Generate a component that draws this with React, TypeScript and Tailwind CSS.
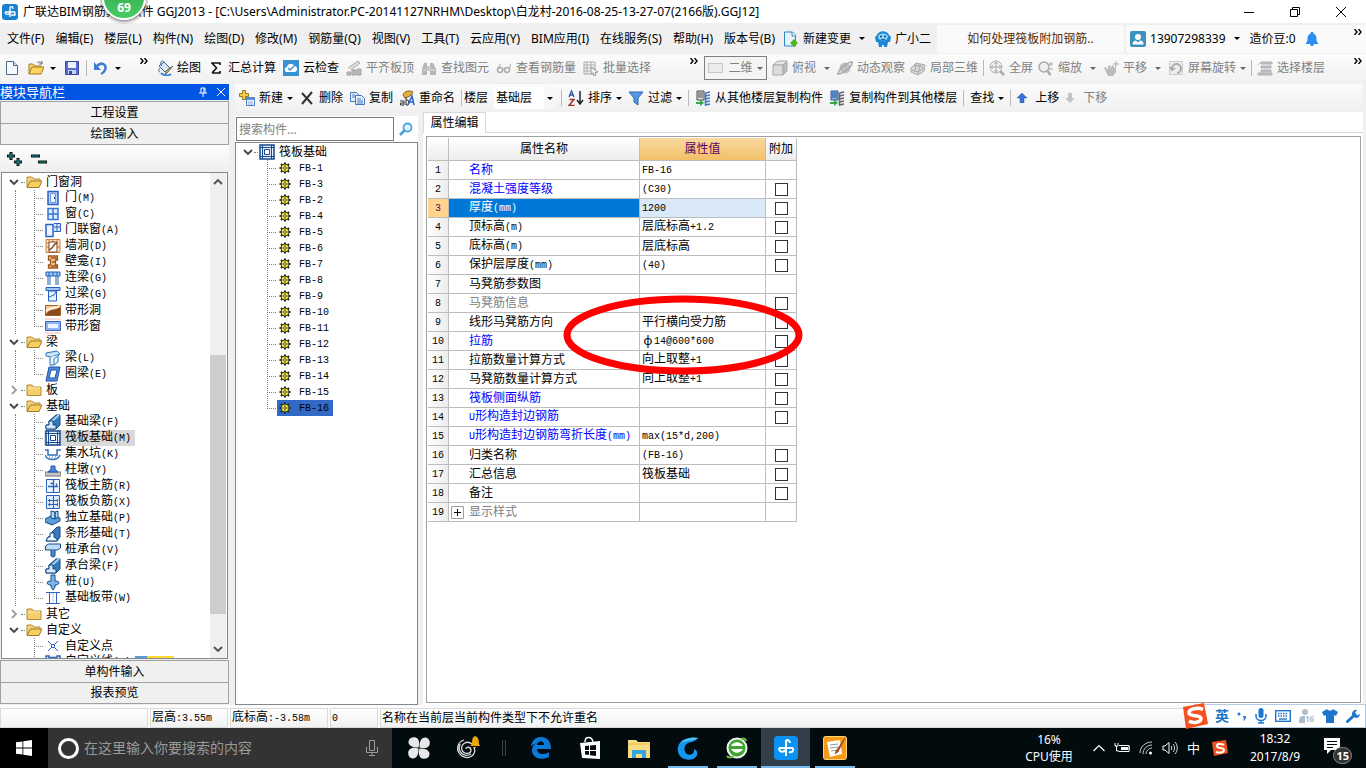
import React from 'react';

type Draw = React.ReactNode;

/* 16x16 drawings used by the toolbars and the trees */
const art: Record<string, Draw> = {
  newDoc: <><path d="M2.5 1.5h7l4 4v9h-11z" fill="#f7fbff" stroke="#4a6a94" /><path d="M9.500 1.500v4h4" fill="#cfe0f5" stroke="#4a6a94" /></>,
  open: <><path d="M1 14V4h4l2 2h6v3" fill="#f8d470" stroke="#a57a22" /><path d="M1 14l3-7h12l-3 7z" fill="#ffd45e" stroke="#a57a22" /><path d="M9 3c2-2 4-1 5 1m0-3v3h-3" fill="none" stroke="#5b6f86" /></>,
  save: <><path d="M1.500 1.500h13v13h-13z" fill="#5570cf" stroke="#39489c" /><path d="M4 2h8v6H4z" fill="#eef2fc" /><path d="M4 10h8v4H4z" fill="#c9d3ee" /><path d="M5 11h3v3H5z" fill="#39489c" /></>,
  undo: <><path d="M4 6c5-5 10-1 8 4-1 2-2 3-4 4" fill="none" stroke="#3f7bd6" strokeWidth="2.500" /><path d="M1 2v8h7z" fill="#3f7bd6" /></>,
  paint: <><path d="M2 6l5-4 6 6-5 4z" fill="#dce9fa" stroke="#35609d" /><path d="M3 8c-2 2-1 4 0 4M7 2c-2-3-5 1-2 4" fill="none" stroke="#35609d" /><path d="M16 6l-6 7-2 2 1-4z" fill="#efbf3d" stroke="#6a6255" /><path d="M4 13c3 3 7 3 10 1" fill="none" stroke="#4186dd" strokeWidth="2" /></>,
  sum: <path d="M4 4V3h8v2M4 3l4.500 5L4 13M4 13h8v-2" fill="none" stroke="#111" strokeWidth="1.600" />,
  cloud: <><rect width="16" height="16" fill="#3791d2" /><path d="M3 12c-3-3 0-5 1-5 1-4 6-4 7-1 4 0 4 5 1 6z" fill="#fff" /><path d="M5 8l2 2 4-4" fill="none" stroke="#3791d2" strokeWidth="1.500" /></>,
  align: <><path d="M1 12h4v3H1zM6 10h4v5H6zM11 9h4v6h-4z" fill="#bbb" stroke="#a5a5a5" /><path d="M2 8L12 1l2 2-9 7" fill="#ddd" stroke="#aaa" /></>,
  binoc: <><path d="M1 15V9l2-6h3v12zM9 15V3h3l3 6v6z" fill="#b5b5b5" /><path d="M6 6h4v5H6z" fill="#cacaca" /><path d="M2 10h3m5 0h4" stroke="#eee" /></>,
  glasses: <><circle cx="4" cy="10" r="2.500" fill="none" stroke="#aaa" strokeWidth="1.500" /><circle cx="11" cy="10" r="2.500" fill="none" stroke="#aaa" strokeWidth="1.500" /><path d="M1.500 9l3-5M13.500 9l1-5M6 9h3" stroke="#aaa" fill="none" /></>,
  batch: <><path d="M1 2h11v12H1zM1 5h11M1 8h11M1 11h11M4 2v12M8 2v6" fill="none" stroke="#aaa" /><path d="M8 7l7 5-3 .500 1 3-2 .500-1-3-2 1z" fill="#eee" stroke="#999" /></>,
  cube: <><path d="M1 5l5-4h9l-4 4z" fill="#e8e8e8" stroke="#a8a8a8" /><path d="M1 5h10v10H1z" fill="#dcdcdc" stroke="#a8a8a8" /><path d="M11 5l4-4v10l-4 4z" fill="#bcbcbc" stroke="#a8a8a8" /></>,
  orbit: <><circle cx="8" cy="8" r="5.500" fill="#c0c0c0" /><path d="M1 14c0-4 9-12 14-12 1 4-9 12-14 12z" fill="none" stroke="#a6a6a6" strokeWidth="1.500" /></>,
  local3d: <><path d="M1 8l5-5 9 2-1 6-6 4-7-3z" fill="#d9d9d9" stroke="#a9a9a9" /><path d="M6 3l-1 9M10 4l-2 11M1 10l7 2 6-4M4 5l9 2" fill="none" stroke="#a9a9a9" /></>,
  full: <><circle cx="7" cy="7" r="6" fill="#f1f1f1" stroke="#aaa" /><path d="M7 2v10M2 7h10M5.500 4L7 2l1.500 2M5.500 10L7 12l1.500-2M4 5.500L2 7l2 1.500M10 5.500L12 7l-2 1.500" fill="none" stroke="#aaa" /><path d="M11 11l4 4" stroke="#aaa" strokeWidth="2.500" /></>,
  zoom: <><circle cx="6" cy="7" r="5" fill="#eee" stroke="#aaa" strokeWidth="1.500" /><path d="M9.500 11l3 4" stroke="#aaa" strokeWidth="2.500" /><path d="M11 4h4m-2-2v4M11 9h4" stroke="#aaa" /></>,
  pan: <><path d="M1 8l2-1 2 3V6l2-1 1 3 1-3 2 1v2l2-1v5l-3 4H5z" fill="#bbb" /><path d="M10 4h6M13 1v6" stroke="#aaa" /></>,
  rotate: <><path d="M1.500 1.500h13v13h-13z" fill="#eee" stroke="#ccc" /><path d="M4 9a4.500 4.500 0 1 1 5 4M2 7l2 3 3-2" fill="none" stroke="#aaa" strokeWidth="2" /></>,
  floors: <path d="M4 2h11v2H4zM1 5l3-3M4 6h10v2H4zM4 10h10v2H4zM1 13h14v2H1z" fill="#bbb" stroke="#b4b4b4" />,
  rect: <rect x=".500" y="3.500" width="14" height="9" fill="#ececec" stroke="#c7c7c7" />,
  create: <><path d="M3.500.500h3v3h3v3h-3v3h-3v-3h-3v-3h3z" fill="#f2cf45" stroke="#9a7c1a" /><path d="M7.500 7.500h8v8h-8z" fill="#f3f8ff" stroke="#4a7fc9" /><path d="M8 8h7v2H8z" fill="#5c93dd" /><path d="M9 12h5M9 14h5" stroke="#83a8dc" /></>,
  remove: <path d="M3 3l10 11M13 2L3 14" stroke="#333" strokeWidth="2" fill="none" />,
  copy: <><path d="M1.500 2.500h6l3 3v6h-9z" fill="#e8f1fd" stroke="#4377bc" /><path d="M6.500 5.500h6l3 3v6h-9z" fill="#e8f1fd" stroke="#4377bc" /><path d="M8 9h4M8 11h6M8 13h6M3 5h3M3 7h3" stroke="#4377bc" /></>,
  rename: <><path d="M4 5c1-4 7-5 10-3l-3 4-5 2z" fill="#eab03f" stroke="#815c1d" /><path d="M1 11h4v4H1.500v-2H5M7 7v8h2l1-2-1-3H7" stroke="#333" fill="none" /><path d="M9 15l4-9 2 9M10 12h5" fill="none" stroke="#2d68cc" strokeWidth="1.600" /></>,
  sort: <><path d="M1 7l2.500-6L6 7M2 5h3" stroke="#2c55a8" fill="none" strokeWidth="1.300" /><path d="M1.500 9.500H6l-5 6h5.500" fill="none" stroke="#a03434" strokeWidth="1.500" /><path d="M12 1v12M9 10l3 4 3-4" fill="none" stroke="#222" strokeWidth="1.500" /></>,
  filter: <path d="M1 2h14L10 8v7l-4-3V8z" fill="#5796e5" stroke="#2e65b2" />,
  copyFrom: <><path d="M2 1h7v9H2z" fill="#e4e4e4" stroke="#444" /><path d="M3 3h5M3 5h5M3 7h5" stroke="#444" /><path d="M10.500 3l4.500-1M10.500 3v12l4.500-1M10.500 6l4.500-1M10.500 9l4.500-1M10.500 12l4.500-1" fill="none" stroke="#3f76c6" strokeWidth="1.600" /><path d="M1 12h4V9l4 4-4 3v-2H1z" fill="#3da64a" /></>,
  copyTo: <><path d="M2 1h7v9H2z" fill="#86b1ea" stroke="#27549c" /><path d="M3 3h5M3 5h5M3 7h5" stroke="#27549c" /><path d="M10.500 3l4.500-1M10.500 3v12l4.500-1M10.500 6l4.500-1M10.500 9l4.500-1M10.500 12l4.500-1" fill="none" stroke="#666" strokeWidth="1.600" /><path d="M1 12h4V9l4 4-4 3v-2H1z" fill="#3da64a" /></>,
  change: <><path d="M1.500 1h8l3 3v11h-11z" fill="#e5f3fc" stroke="#2a88c4" /><path d="M9 1v4h4" fill="#fff" stroke="#2a88c4" /><path d="M11 8l4 4-4 4-4-4z" fill="#4fb41e" /></>,
  robot: <><path d="M2 4c2-5 10-5 12 0l2 2-1 5h-2l-1 5H9v-2H7v2H4L3 11H1L0 6z" fill="#1c87d6" /><ellipse cx="8" cy="6" rx="5" ry="3.500" fill="#8fd4fa" /><circle cx="6" cy="5.500" r="1" fill="#084876" /><circle cx="10" cy="5.500" r="1" fill="#084876" /><path d="M6 8c1 1 3 1 4 0" stroke="#084876" fill="none" /></>,
  account: <><rect width="16" height="16" rx="2" fill="#3c92bd" /><circle cx="8" cy="6" r="3" fill="#fff" /><path d="M2.500 13.500c0-3 2-4 3.500-4l2 2 2-2c2 0 3.500 1 3.500 4z" fill="#fff" /></>,
  bell: <path d="M2 12c2-2 1-4 2-7 1-2 2-2 3-3V1h2v1c1 1 2 1 3 3 1 3 0 5 2 7v1h-4c-1 3-3 3-4 0H2z" fill="#2c8ef0" />,

  folderOpen: <><path d="M1 13V3h5l2 2h6v3" fill="#f3d27c" stroke="#b18a3b" /><path d="M1 13.500L4.500 7H16l-3 6.500z" fill="#f9cf5c" stroke="#9c7833" /></>,
  folder: <><path d="M1 13.500V3h5l1.500 2H15v8.500z" fill="#f5cf6b" stroke="#b18a3b" /><path d="M2 6h12" stroke="#fff0b8" /></>,
  door: <><path d="M3 1.500h10v13H3z" fill="#b7d2fb" stroke="#2b5fc4" strokeWidth="1.500" /><path d="M5.500 3.500h5v9h-5z" fill="#eaf3ff" stroke="#6c9ae0" /><path d="M9 8h1" stroke="#123c8c" strokeWidth="2" /></>,
  window: <><path d="M3 2.500h10v11H3z" fill="#dcebff" stroke="#3b73d1" strokeWidth="1.500" /><path d="M8 2v12M3 8h10" stroke="#3b73d1" strokeWidth="1.500" /></>,
  doorWindow: <><path d="M1 2.500h7v12H1z" fill="#eaf3ff" stroke="#2b5fc4" strokeWidth="1.500" /><path d="M9 1.500h6.500v8H9M12 1v8M9 5h6" fill="#dcebff" stroke="#2b5fc4" /></>,
  wallHole: <><path d="M1 1.500h14v13H1zM1 5h3M1 9h3M4 1v3M8 1v3M12 1v3M12 9h3" fill="#fbe0bf" stroke="#c98143" /><path d="M4 4h8v10H4z" fill="#fff" stroke="#7c4320" /><path d="M4 12c5-1 3-6 8-7" fill="none" stroke="#7c4320" strokeWidth="1.500" /></>,
  niche: <path d="M3.500 2h9v4h-2v5h2v3h-9v-3h2V6h-2zM6 4h6M7 8h3M6 12h6" fill="#f8c583" stroke="#9d5520" strokeWidth="1.300" />,
  linkBeam: <><path d="M1 2h14v4H1z" fill="#9cc4f7" stroke="#2461b8" /><path d="M3 6v9M5 6v9M11 6v9M13 6v9" stroke="#2461b8" /><path d="M4 2v4M8 2v4M12 2v4" stroke="#2461b8" /></>,
  lintel: <><path d="M1 1.500h14v3H1z" fill="#9cc4f7" stroke="#2461b8" /><path d="M3.500 5h8v10h-8z" fill="#e9f3ff" stroke="#2461b8" /><path d="M4 11l5-2 3-5" fill="none" stroke="#2461b8" /></>,
  stripHole: <><path d="M.500 3.500h15v10H.500z" fill="#f6c893" stroke="#a35c24" /><path d="M1 12C5 6 9 9 15 5v8H1z" fill="#8b4a1c" /><path d="M1 9c4-4 8-2 14-5" stroke="#fff3df" fill="none" strokeWidth="2" /></>,
  stripWindow: <><path d="M0 1h16M0 15h16" stroke="#f3b6a4" /><path d="M.500 3.500h15v9H.500z" fill="#8db4f4" stroke="#3767be" /><path d="M3 6h10v4H3z" fill="#edf4ff" /></>,
  beam: <><path d="M1 3l11-2 3 3-9 3-5-1z" fill="#c7e6fb" stroke="#2a78ba" /><path d="M5 7v8h4V9l5-4M9 15l4-3V6" fill="#e2f3fe" stroke="#2a78ba" /></>,
  ringBeam: <path d="M4 1h11l-3 14H1zM6 4l-2 8h6l2-8z" fill="#4f8ce0" fillRule="evenodd" stroke="#1f4fa4" />,
  foundBeam: <><path d="M1 15v-4h3V7l7-6h4v10l-4 4z" fill="#3b78b8" stroke="#134a86" /><path d="M7 7l7-6" stroke="#9fcdf5" strokeWidth="2" /><path d="M1 15v-4h3V7h4v4h3v4z" fill="#d3e9fc" stroke="#134a86" /></>,
  raft: <><path d="M1 1h14v14H1z" fill="#e6f1fc" stroke="#164a8c" strokeWidth="1.500" /><path d="M3.500 1v14M12.500 1v14M1 3.500h14M1 12.500h14" stroke="#164a8c" /><path d="M5.500 5.500h5v5h-5z" fill="#fff" stroke="#164a8c" /></>,
  sump: <><path d="M0 4h3v5h9V4h4M0 9c2 6 13 6 15 0" fill="none" stroke="#2e72c0" strokeWidth="1.500" /><path d="M4 11h1M7 11h1M10 11h1M6 13h1M9 13h1" stroke="#2e72c0" /></>,
  pier: <><path d="M0 10h16v4H0z" fill="#c6c6c6" stroke="#777" /><path d="M3 10l2-2h1V4h4v4h1l2 2z" fill="#4c8ce2" stroke="#1f55a8" /></>,
  mainBar: <><path d="M1.500 1.500h13v13h-13z" fill="#edf5ff" stroke="#2c62bb" /><path d="M8.500 2v3.500h-3M8.500 5v9M3 8.500h10M11.500 8v-2.500" stroke="#2c62bb" strokeWidth="1.300" fill="none" /></>,
  negBar: <><path d="M1.500 1.500h13v13h-13z" fill="#dce8fb" stroke="#2c62bb" /><path d="M8.500 2v12M3 6.500h10M3 10.500h10M4.500 5v3M12.500 5v3M4.500 9v3M12.500 9v3" stroke="#2c62bb" /></>,
  isolated: <><path d="M0 9l6-3 9 2v3l-8 4-7-3z" fill="#5d9ddb" stroke="#134a86" /><path d="M6 1l4 1v7l-4-1zM10 2l3-1v6l-3 2z" fill="#b6d8f5" stroke="#134a86" /></>,
  strip: <><path d="M1 15l2-4 4-2V6l5-5h3v10l-3 4z" fill="#3b78b8" stroke="#134a86" /><path d="M1 15l2-4h2V7h4v4l3 2v2z" fill="#e8f4ff" stroke="#134a86" /></>,
  pileCap: <><path d="M.500 4l3-2h12v4l-3 2h-12z" fill="#bcdcf8" stroke="#134a86" /><path d="M6 8v6l2 1 2-1V8" fill="#4b8ad0" stroke="#134a86" /></>,
  pile: <path d="M6 1h4v6c3 0 4 1 4 2s-2 2-4 2v2l-2 3-2-3v-2c-2 0-4-1-4-2s1-2 4-2z" fill="#7db1ea" stroke="#134a86" />,
  band: <><path d="M1 2.500h14M1 13.500h14" stroke="#2f62bd" /><path d="M4.500 3v10M11.500 3v10" stroke="#2f62bd" /><path d="M8 3v10" stroke="#9db9e8" strokeDasharray="2 1" /></>,
  point: <><path d="M3 3l10 10M13 3L3 13" stroke="#2b63bd" /><path d="M6.500 6.500h3v3h-3z" fill="#fff" stroke="#2b63bd" /></>,
  line: <path d="M1 2h3v3H1zM12 2h3v3h-3zM4 3.500h8" fill="#fff" stroke="#2b63bd" strokeWidth="1.500" />,
  gear: <><path d="M8 2.500v11M2.500 8h11M4 4l8 8M12 4l-8 8" stroke="#222" strokeWidth="2" /><circle cx="8" cy="8" r="4" fill="#f5ea1e" stroke="#333" /><path d="M8 5v6M5 8h6" stroke="#6b6720" strokeWidth=".800" /><circle cx="8" cy="8" r="1.300" fill="#fff" stroke="#333" strokeWidth=".800" /></>,
};

function Icon({ name }: { name: string }) {
  return <svg viewBox="0 0 16 16" className="h-4 w-4 shrink-0">{art[name]}</svg>;
}

function Caret({ muted = false }: { muted?: boolean }) {
  return (
    <svg viewBox="0 0 6 3" className={muted ? 'h-[3px] w-1.5 shrink-0 text-[#666]' : 'h-[3px] w-1.5 shrink-0 text-black'}>
      <path d="M0 0h6L3 3z" fill="currentColor" />
    </svg>
  );
}

const Overflow = () => (
  <svg viewBox="0 0 8 6" className="h-1.5 w-2 shrink-0">
    <path d="M.5 0l2.500 3L.500 6M4.500 0L7 3 4.500 6" fill="none" stroke="#000" strokeWidth="1.400" />
  </svg>
);

const Divider = () => <span className="h-4 w-px shrink-0 bg-[#b9b9b9]" />;

/* CJK runs at 12px, ASCII runs in a half-width monospace face */
function Cell({ text }: { text: string }) {
  return (
    <span className="whitespace-pre">
      {text.split(/([\x20-\x7e]+)/).map((part, i) =>
        i % 2 ? <span key={i} className="font-['Liberation_Mono','Noto_Sans_CJK_SC',monospace] text-[10px]">{part}</span> : part,
      )}
    </span>
  );
}

function Tool({ icon, label, muted, caret, tight }: { icon?: string; label: string; muted?: boolean; caret?: boolean; tight?: boolean }) {
  return (
    <button className={muted ? 'flex items-center gap-1 text-[#808080]' : 'flex items-center gap-1 text-black'}>
      {icon && <Icon name={icon} />}
      {label}
      {caret && <span className={tight ? '' : 'pr-0.5 pl-1'}><Caret muted={muted} /></span>}
    </button>
  );
}

const menus = ['文件(F)', '编辑(E)', '楼层(L)', '构件(N)', '绘图(D)', '修改(M)', '钢筋量(Q)', '视图(V)', '工具(T)', '云应用(Y)', 'BIM应用(I)', '在线服务(S)', '帮助(H)', '版本号(B)'];

function TitleBar() {
  return (
    <header className="relative flex h-[23px] shrink-0 items-center bg-white pl-0.5">
      <svg viewBox="0 0 16 16" className="h-4 w-4">
        <rect width="16" height="16" rx="3" fill="#1b82d1" />
        <path d="M8 3v10M3 8h10M3 8c0 3 3 3 5 1M8 3c2-1 3 0 3 2M13 8v3H9" fill="none" stroke="#fff" strokeWidth="1.300" />
      </svg>
      <h1 className="ml-[5px] flex-1 whitespace-nowrap text-[12px]">
        广联达BIM钢筋算量软件 GGJ2013 - [C:\Users\Administrator.PC-20141127NRHM\Desktop\白龙村-2016-08-25-13-27-07(2166版).GGJ12]
      </h1>
      <div className="flex items-center gap-9 pr-5">
        <button aria-label="最小化"><svg viewBox="0 0 10 10" className="h-2.5 w-2.5"><path d="M0 5.500h10" stroke="#000" /></svg></button>
        <button aria-label="还原"><svg viewBox="0 0 10 10" className="h-2.5 w-2.5"><path d="M.5 2.500h7v7h-7zM2.500 2.500v-2h7v7h-2" fill="none" stroke="#000" /></svg></button>
        <button aria-label="关闭"><svg viewBox="0 0 10 10" className="h-2.5 w-2.5"><path d="M0 0l10 10M10 0L0 10" stroke="#000" /></svg></button>
      </div>
      {/* floating speed ball */}
      <div className="absolute top-0 left-[100px] z-10 h-6 w-12 overflow-hidden">
        <div className="absolute bottom-1 left-0.5 flex h-11 w-11 items-end justify-center rounded-full border-2 border-white bg-gradient-to-b from-[#2ca548] to-[#48cb63] pb-0.5 text-[12px] font-bold text-white shadow-[0_1px_4px_#555]">69</div>
      </div>
    </header>
  );
}

function MenuBar() {
  return (
    <nav className="flex h-[31px] shrink-0 items-center bg-[#f0f0f0] pl-[7px] whitespace-nowrap">
      <div className="flex items-center gap-[11px]">
        {menus.map((m) => <button key={m}>{m}</button>)}
      </div>
      <div className="ml-2 flex items-center gap-2">
        <Tool icon="change" label="新建变更" caret />
        <Tool icon="robot" label="广小二" />
      </div>
      <a href="#tip" className="ml-1.5 flex h-7 w-[187px] items-center justify-center rounded bg-[#fafafa] text-[#5a2d00]">如何处理筏板附加钢筋..</a>
      <div className="ml-0.5 flex h-7 flex-1 items-center gap-2 rounded-l bg-[#fafafa] pl-1">
        <Tool icon="account" label="13907298339" caret />
        <span>造价豆:0</span>
        <Icon name="bell" />
        <span className="ml-auto flex h-5 items-start pr-1"><Overflow /></span>
      </div>
    </nav>
  );
}

function Toolbar() {
  return (
    <div className="flex h-[30px] shrink-0 items-center bg-gradient-to-b from-[#fcfcfc] to-[#f0f0f0] pb-0.5 whitespace-nowrap">
      <div className="flex w-[152px] items-center pl-1">
        <button aria-label="新建工程"><Icon name="newDoc" /></button>
        <button aria-label="打开" className="ml-2 flex items-center gap-1.5"><Icon name="open" /><Caret /></button>
        <button aria-label="保存" className="mr-1.5 ml-2"><Icon name="save" /></button>
        <Divider />
        <button aria-label="撤销" className="ml-1.5 flex items-center gap-1.5"><Icon name="undo" /><Caret /></button>
        <span className="ml-auto flex h-5 items-start pr-1"><Overflow /></span>
      </div>
      <div className="flex w-[552px] items-center gap-[7px] pl-[5px]">
        <Tool icon="paint" label="绘图" />
        <Tool icon="sum" label="汇总计算" />
        <Tool icon="cloud" label="云检查" />
        <Tool icon="align" label="平齐板顶" muted />
        <Tool icon="binoc" label="查找图元" muted />
        <Tool icon="glasses" label="查看钢筋量" muted />
        <Tool icon="batch" label="批量选择" muted />
        <span className="ml-auto flex h-5 items-start pr-1.5"><Overflow /></span>
      </div>
      <div className="flex flex-1 items-center gap-[5px]">
        <div className="flex h-6 w-[63px] items-center justify-center border border-[#808080] bg-[#f4f4f4]"><Tool icon="rect" label="二维" muted caret tight /></div>
        <Tool icon="cube" label="俯视" muted caret />
        <Tool icon="orbit" label="动态观察" muted />
        <Tool icon="local3d" label="局部三维" muted />
        <Divider />
        <Tool icon="full" label="全屏" muted />
        <Tool icon="zoom" label="缩放" muted caret />
        <Tool icon="pan" label="平移" muted caret />
        <Tool icon="rotate" label="屏幕旋转" muted caret tight />
        <Divider />
        <Tool icon="floors" label="选择楼层" muted />
        <span className="ml-auto flex h-5 items-start pr-1"><Overflow /></span>
      </div>
    </div>
  );
}

type Item = { icon: string; text: string; active?: boolean; badge?: boolean };
type Group = { text: string; open: boolean; items: Item[] };

const modules: Group[] = [
  { text: '门窗洞', open: true, items: [
    { icon: 'door', text: '门(M)' },
    { icon: 'window', text: '窗(C)' },
    { icon: 'doorWindow', text: '门联窗(A)' },
    { icon: 'wallHole', text: '墙洞(D)' },
    { icon: 'niche', text: '壁龛(I)' },
    { icon: 'linkBeam', text: '连梁(G)' },
    { icon: 'lintel', text: '过梁(G)' },
    { icon: 'stripHole', text: '带形洞' },
    { icon: 'stripWindow', text: '带形窗' },
  ] },
  { text: '梁', open: true, items: [
    { icon: 'beam', text: '梁(L)' },
    { icon: 'ringBeam', text: '圈梁(E)' },
  ] },
  { text: '板', open: false, items: [] },
  { text: '基础', open: true, items: [
    { icon: 'foundBeam', text: '基础梁(F)' },
    { icon: 'raft', text: '筏板基础(M)', active: true },
    { icon: 'sump', text: '集水坑(K)' },
    { icon: 'pier', text: '柱墩(Y)' },
    { icon: 'mainBar', text: '筏板主筋(R)' },
    { icon: 'negBar', text: '筏板负筋(X)' },
    { icon: 'isolated', text: '独立基础(P)' },
    { icon: 'strip', text: '条形基础(T)' },
    { icon: 'pileCap', text: '桩承台(V)' },
    { icon: 'foundBeam', text: '承台梁(F)' },
    { icon: 'pile', text: '桩(U)' },
    { icon: 'band', text: '基础板带(W)' },
  ] },
  { text: '其它', open: false, items: [] },
  { text: '自定义', open: true, items: [
    { icon: 'point', text: '自定义点' },
    { icon: 'line', text: '自定义线(X)', badge: true },
  ] },
];

function Chevron({ open }: { open: boolean }) {
  return (
    <svg viewBox="0 0 10 10" className="h-2.5 w-2.5 shrink-0">
      <path d={open ? 'M1 3l4 4 4-4' : 'M3 1l4 4-4 4'} fill="none" stroke={open ? '#444' : '#a0a0a0'} strokeWidth="1.800" />
    </svg>
  );
}

/* dotted connector from the parent line to a leaf */
function Branch({ last }: { last: boolean }) {
  return (
    <svg viewBox="0 0 10 16" className="h-4 w-2.5 shrink-0">
      <path d={last ? 'M.5 0v8' : 'M.5 0v16'} stroke="#808080" strokeDasharray="1 1" />
      <path d="M0 8.500h10" stroke="#808080" strokeDasharray="1 1" />
    </svg>
  );
}

const wideButton = 'flex h-[22px] shrink-0 items-center justify-center border border-b-0 border-[#a0a0a0] bg-[#f0f0f0] last:border-b';

function ModulePanel() {
  return (
    <aside className="flex w-[229px] shrink-0 flex-col pb-px">
      <div className="flex h-4 shrink-0 items-center bg-[#0055e5] text-white">
        <h2 className="flex-1 text-[13px] leading-4">模块导航栏</h2>
        <button aria-label="固定" className="mr-2.5"><svg viewBox="0 0 8 10" className="h-2.5 w-2"><path d="M2 1h4v5M2 1v5M5 1v5M0 6h8M4 6v4" fill="none" stroke="#fff" /></svg></button>
        <button aria-label="关闭面板" className="mr-1"><svg viewBox="0 0 8 8" className="h-2 w-2"><path d="M0 0l8 8M8 0L0 8" stroke="#fff" /></svg></button>
      </div>
      <div className="mt-px flex shrink-0 flex-col">
        <button className={wideButton}>工程设置</button>
        <button className={wideButton}>绘图输入</button>
      </div>
      <div className="flex h-[27px] shrink-0 items-center gap-2 bg-gradient-to-b from-[#fdfdfd] to-[#efefef] pl-[7px]">
        <button aria-label="全部展开"><svg viewBox="0 0 16 14" className="h-3.5 w-4"><path d="M4 0v8M0 4h8M11 6v8M7 10h8" stroke="#111" strokeWidth="3" /><path d="M4 1v6M1 4h6M11 7v6M8 10h6" stroke="#009c93" strokeWidth="1.200" /></svg></button>
        <button aria-label="全部折叠"><svg viewBox="0 0 16 14" className="h-3.5 w-4"><path d="M0 4h9M7 10h9" stroke="#111" strokeWidth="3" /><path d="M1 4h7M8 10h7" stroke="#009c93" strokeWidth="1.200" /></svg></button>
      </div>
      <div className="mx-px flex min-h-0 flex-1 overflow-hidden border border-[#82878f] bg-white">
        <ul className="min-w-0 flex-1 overflow-hidden pt-px pl-0.5">
          {modules.map((group, g) => (
            <li key={group.text}>
              <div className="flex h-4 items-center pl-[5px]">
                <Chevron open={group.open} />
                <span className="mr-px ml-0.5 w-1 border-t border-dotted border-[#808080]" />
                <Icon name={group.open ? 'folderOpen' : 'folder'} />
                <span className="ml-1"><Cell text={group.text} /></span>
              </div>
              <ul>
                {group.items.map((item, i) => (
                  <li key={item.text} className="flex h-4 items-center pl-[11px]">
                    <span className={g < modules.length - 1 ? 'h-4 w-[19px] shrink-0 border-l border-dotted border-[#808080]' : 'w-[19px] shrink-0'} />
                    <Branch last={i === group.items.length - 1 && g < modules.length - 1} />
                    <span className={item.active ? 'flex h-4 items-center gap-1 bg-[#d9d9d9] pr-1 pl-px' : 'flex h-4 items-center gap-1 pl-px'}>
                      <Icon name={item.icon} />
                      <Cell text={item.text} />
                      {item.badge && <span className="flex items-center"><span className="h-3 w-3 border-2 border-[#5a9ad5]" /><b className="bg-[#ffdb2e] px-0.5 text-[10px] leading-3">NEW</b></span>}
                    </span>
                  </li>
                ))}
              </ul>
            </li>
          ))}
        </ul>
        <div className="mr-px flex w-4 shrink-0 flex-col items-center bg-[#f0f0f0]">
          <svg viewBox="0 0 10 10" className="my-1 h-2.5 w-2.5 shrink-0"><path d="M1 7l4-4 4 4" fill="none" stroke="#505050" strokeWidth="1.800" /></svg>
          <div className="grow-[164]" />
          <div className="w-full grow-[260] bg-[#cdcdcd]" />
          <div className="grow-[26]" />
          <svg viewBox="0 0 10 10" className="my-1 h-2.5 w-2.5 shrink-0"><path d="M1 3l4 4 4-4" fill="none" stroke="#505050" strokeWidth="1.800" /></svg>
        </div>
      </div>
      <div className="mt-px flex shrink-0 flex-col">
        <button className={wideButton}>单构件输入</button>
        <button className={wideButton}>报表预览</button>
      </div>
    </aside>
  );
}

function EditBar() {
  return (
    <div className="flex h-7 shrink-0 items-center gap-1.5 bg-gradient-to-b from-[#fbfbfb] to-[#f0f0f0] pl-1 whitespace-nowrap">
      <Tool icon="create" label="新建" caret tight />
      <Tool icon="remove" label="删除" />
      <Tool icon="copy" label="复制" />
      <Tool icon="rename" label="重命名" />
      <Divider />
      <label className="-ml-1 flex items-center gap-1.5">
        楼层
        <span className="flex h-[22px] items-center bg-white">
          <select className="w-[50px] appearance-none bg-white pl-0.5 outline-none"><option>基础层</option></select>
          <span className="flex h-full w-[11px] items-center justify-center bg-[#f7f7f7]"><Caret /></span>
        </span>
      </label>
      <Divider />
      <Tool icon="sort" label="排序" caret tight />
      <Tool icon="filter" label="过滤" caret tight />
      <Divider />
      <Tool icon="copyFrom" label="从其他楼层复制构件" />
      <Tool icon="copyTo" label="复制构件到其他楼层" />
      <Divider />
      <Tool label="查找" caret tight />
      <Divider />
      <button className="flex items-center gap-2">
        <svg viewBox="0 0 10 10" className="h-2.5 w-2.5"><path d="M5 0l5 5H7v5H3V5H0z" fill="#3672dd" stroke="#24509f" strokeWidth=".500" /></svg>
        上移
      </button>
      <button className="flex items-center gap-2 text-[#808080]">
        <svg viewBox="0 0 10 10" className="h-2.5 w-2.5"><path d="M5 10l5-5H7V0H3v5H0z" fill="#c4c4c4" /></svg>
        下移
      </button>
    </div>
  );
}

const components = [1, 3, 2, 4, 5, 6, 7, 8, 9, 10, 11, 12, 13, 14, 15, 16];

function ComponentPanel() {
  return (
    <section className="flex w-[183px] shrink-0 flex-col pt-1">
      <div className="flex h-[26px] shrink-0 items-center bg-white pl-px">
        <input aria-label="搜索构件" placeholder="搜索构件..." className="h-6 min-w-0 flex-1 border border-[#7a7a7a] bg-white px-0.5 outline-none placeholder:text-[#808080]" />
        <button aria-label="搜索" className="flex w-6 justify-center">
          <svg viewBox="0 0 14 14" className="h-3.5 w-3.5"><circle cx="8.500" cy="5.500" r="4" fill="#e6f5ff" stroke="#4aa3e0" strokeWidth="1.800" /><path d="M5.500 8.500L1 13" stroke="#4aa3e0" strokeWidth="2.500" /></svg>
        </button>
      </div>
      <div className="min-h-0 flex-1 overflow-hidden border border-[#82878f] bg-white pt-px">
        <div className="flex h-4 items-center pl-[7px]">
          <Chevron open />
          <span className="mr-px ml-px w-1 border-t border-dotted border-[#808080]" />
          <Icon name="raft" />
          <span className="ml-1"><Cell text="筏板基础" /></span>
        </div>
        <ul>
          {components.map((n) => (
            <li key={n} className="flex h-4 items-center pl-[31px]">
              <Branch last={n === 16} />
              <span className={n === 16 ? 'flex h-4 items-center gap-1.5 bg-[#316ac5] pr-1' : 'flex h-4 items-center gap-1.5'}>
                <Icon name="gear" />
                <Cell text={`FB-${n}`} />
              </span>
            </li>
          ))}
        </ul>
      </div>
    </section>
  );
}

type Prop = { name: string; value?: string; check?: boolean; tone?: 'blue' | 'gray'; rebar?: boolean };

const props: Prop[] = [
  { name: '名称', value: 'FB-16', tone: 'blue' },
  { name: '混凝土强度等级', value: '(C30)', check: true, tone: 'blue' },
  { name: '厚度(mm)', value: '1200', check: true },
  { name: '顶标高(m)', value: '层底标高+1.2', check: true },
  { name: '底标高(m)', value: '层底标高', check: true },
  { name: '保护层厚度(mm)', value: '(40)', check: true },
  { name: '马凳筋参数图' },
  { name: '马凳筋信息', check: true, tone: 'gray' },
  { name: '线形马凳筋方向', value: '平行横向受力筋', check: true },
  { name: '拉筋', value: '14@600*600', check: true, tone: 'blue', rebar: true },
  { name: '拉筋数量计算方式', value: '向上取整+1', check: true },
  { name: '马凳筋数量计算方式', value: '向上取整+1', check: true },
  { name: '筏板侧面纵筋', check: true, tone: 'blue' },
  { name: 'U形构造封边钢筋', check: true, tone: 'blue' },
  { name: 'U形构造封边钢筋弯折长度(mm)', value: 'max(15*d,200)', tone: 'blue' },
  { name: '归类名称', value: '(FB-16)', check: true },
  { name: '汇总信息', value: '筏板基础', check: true },
  { name: '备注', check: true },
  { name: '显示样式', tone: 'gray' },
];

const tones = { blue: 'text-[#0000ff]', gray: 'text-[#808080]' };

function PropertyTable() {
  return (
    <div className="relative w-[369px]">
      <table className="w-full table-fixed border-separate border-spacing-0">
        <colgroup>
          <col className="w-[21px]" />
          <col className="w-[191px]" />
          <col className="w-[126px]" />
          <col className="w-[31px]" />
        </colgroup>
        <thead>
          <tr className="h-[23px]">
            <th className="border-r border-b border-[#bdbdbd] bg-gradient-to-b from-white to-[#ececec] p-0" />
            <th className="border-r border-b border-[#bdbdbd] bg-gradient-to-b from-white to-[#ececec] p-0 font-normal">属性名称</th>
            <th className="border-r border-b border-[#bdbdbd] bg-gradient-to-b from-[#f9d99f] to-[#f2c067] p-0 font-normal text-[#5f0060]">属性值</th>
            <th className="border-r border-b border-[#bdbdbd] bg-gradient-to-b from-white to-[#ececec] p-0 font-normal">附加</th>
          </tr>
        </thead>
        <tbody>
          {props.map((p, i) => {
            const current = i === 2;
            return (
              <tr key={p.name} className="h-[19px]">
                <td className={`border-r border-b border-[#bdbdbd] p-0 ${current ? 'bg-[#ffd58d] text-[#5f0060]' : 'bg-gradient-to-r from-white to-[#ececec]'}`}>
                  <div className="flex h-[18px] items-center justify-center"><Cell text={String(i + 1)} /></div>
                </td>
                <td className={`border-r border-b border-[#bdbdbd] p-0 ${current ? 'bg-[#0078d7] text-white' : p.tone ? tones[p.tone] : ''}`}>
                  <div className="flex h-[18px] items-center">
                    <span className="flex w-5 shrink-0 pl-0.5">
                      {i === 18 && (
                        <button aria-label="展开" className="text-black">
                          <svg viewBox="0 0 13 13" className="h-[13px] w-[13px]"><path d="M.5.500h12v12H.500z" fill="#fff" stroke="#a0a0a0" /><path d="M3 6.500h7M6.500 3v7" stroke="currentColor" /></svg>
                        </button>
                      )}
                    </span>
                    <Cell text={p.name} />
                  </div>
                </td>
                <td className={`border-r border-b border-[#bdbdbd] p-0 pl-0.5 ${current ? 'bg-[#d9e9f8]' : ''}`}>
                  <div className="flex h-[18px] items-center">
                    {p.rebar && <span className="w-3 text-center">ф</span>}
                    {p.value && <Cell text={p.value} />}
                  </div>
                </td>
                <td className="border-r border-b border-[#bdbdbd] p-0">
                  {p.check && <input type="checkbox" aria-label={`附加 ${p.name}`} className="mx-auto block h-[13px] w-[13px] appearance-none border border-[#333] bg-white" />}
                </td>
              </tr>
            );
          })}
        </tbody>
      </table>
      {/* red pen mark round the tie-bar rows */}
      <svg viewBox="0 0 240 80" className="pointer-events-none absolute top-[157px] left-[135px] h-20 w-60">
        <ellipse cx="120" cy="40" rx="116" ry="36" fill="none" stroke="#ff0000" strokeWidth="7" />
      </svg>
    </div>
  );
}

function StatusBar() {
  const box = 'flex h-5 items-center border border-[#d9d9d9] bg-gradient-to-b from-white to-[#f1f1f1] pl-px';
  return (
    <footer className="relative flex h-[23px] shrink-0 items-end gap-0.5 bg-[#fbfbfb]">
      <div className={`${box} w-[148px]`} />
      <div className={`${box} w-[78px]`}><Cell text="层高:3.55m" /></div>
      <div className={`${box} w-[98px]`}><Cell text="底标高:-3.58m" /></div>
      <div className={`${box} w-[48px]`}><Cell text="0" /></div>
      <div className={`${box} flex-1`}><Cell text="名称在当前层当前构件类型下不允许重名" /></div>

      {/* input method bar floats over the right end */}
      <div className="absolute right-0 bottom-0 flex h-6 w-[172px] items-center gap-2 border border-[#b5cde4] bg-white pl-5 text-[#1d76cc]">
        <svg viewBox="0 0 28 28" className="absolute -top-[3px] -left-[14px] h-7 w-7">
          <path d="M2 5L23 1l4 21-22 5z" fill="#f4511e" />
          <path d="M22 7.500C17 5 7 7 8 11c1 4.500 12 1 12 5.500 0 4-8 5-12 2.500" fill="none" stroke="#fff" strokeWidth="3.500" />
        </svg>
        <span className="text-[14px] font-bold">英</span>
        <svg viewBox="0 0 10 10" className="h-2.5 w-2.5"><circle cx="2" cy="3" r="1.500" fill="currentColor" /><path d="M6 5h3c0 3-1 4-3 5 1-2 1-3 0-5z" fill="currentColor" /></svg>
        <svg viewBox="0 0 12 16" className="h-4 w-3"><rect x="3.500" width="5" height="10" rx="2.500" fill="currentColor" /><path d="M1 6v2c0 6 10 6 10 0V6M6 12v3M3 15h6" fill="none" stroke="currentColor" strokeWidth="1.500" /></svg>
        <svg viewBox="0 0 16 12" className="h-3 w-4"><rect x=".700" y=".700" width="14.600" height="10.600" fill="#fff" stroke="currentColor" strokeWidth="1.400" /><path d="M3 3.500h10M3 6h10" stroke="currentColor" strokeWidth="1.400" strokeDasharray="1.500 1" /><path d="M4 9h8" stroke="currentColor" strokeWidth="1.400" /></svg>
        <span className="flex items-end text-[#aebccc]">
          <svg viewBox="0 0 10 14" className="h-3.5 w-2.5"><circle cx="6" cy="3" r="3" fill="currentColor" /><path d="M0 14c0-8 3-7 6-7h4v7z" fill="currentColor" /></svg>
          <b className="-ml-1 bg-white text-[8px] leading-2">16</b>
        </span>
        <svg viewBox="0 0 16 14" className="h-3.5 w-4"><path d="M5 0c1 2 5 2 6 0l5 3-2 4-2-1v8H4V6L2 7 0 3z" fill="currentColor" /></svg>
        <svg viewBox="0 0 14 14" className="h-3.5 w-3.5"><path d="M1.500 12.500L9 5.500" stroke="currentColor" strokeWidth="3" strokeLinecap="round" /><path d="M11 1a4 4 0 1 0 3 4l-3 1.500L8.500 4.500z" fill="currentColor" /></svg>
      </div>
    </footer>
  );
}

function TaskButton({ label, running, active, children }: { label: string; running?: boolean; active?: boolean; children: Draw }) {
  return (
    <button aria-label={label} className={`flex h-10 w-[49px] shrink-0 flex-col items-center justify-end ${active ? 'bg-[#333f48]' : ''}`}>
      <svg viewBox="0 0 24 24" className="mb-1.5 h-6 w-6">{children}</svg>
      <span className={`h-0.5 ${active ? 'w-full' : 'w-10'} ${running ? 'bg-[#76b9ed]' : ''}`} />
    </button>
  );
}

function TaskBar() {
  return (
    <div className="flex h-10 shrink-0 items-center bg-[#020b0e] text-white">
      <button aria-label="开始" className="flex h-10 w-12 items-center justify-center bg-black">
        <svg viewBox="0 0 16 16" className="h-4 w-4"><path d="M0 2.300L6.500 1.400v6.200H0zM7.300 1.300L16 0v7.600H7.300zM0 8.400h6.500v6.200L0 13.700zM7.300 8.400H16V16l-8.700-1.300z" fill="#fff" /></svg>
      </button>
      <label className="flex h-10 w-[344px] items-center bg-[#333] pl-2.5">
        <span className="h-[21px] w-[21px] rounded-full border-[3px] border-white" />
        <input aria-label="搜索" placeholder="在这里输入你要搜索的内容" className="ml-[5px] w-[270px] bg-transparent text-[14px] outline-none placeholder:text-[#9a9a9a]" />
        <svg viewBox="0 0 12 16" className="ml-3 h-4 w-3"><path d="M3.500.500h5v10h-5zM.500 7v5.500h11V7M6 12.500v3M3 15.500h6" fill="none" stroke="#9a9a9a" /></svg>
      </label>
      <div className="flex pl-0.5">
        <TaskButton label="浏览助手">
          <g fill="#e8e8e8">
            <path d="M11.500 11.500C5 12 1 9 1.500 5.500 2 1 8 0 10.500 2.500c2 2 2 5 1 9z" />
            <path d="M12.500 11.500C12 5 15 1 18.500 1.500c4.500.500 5.500 6.500 3 9-2 2-5 2-9 1z" />
            <path d="M12.500 12.500c6.500-.500 10.500 2.500 10 6-.500 4.500-6.500 5.500-9 3-2-2-2-5-1-9z" />
            <path d="M11.500 12.500c.500 6.500-2.500 10.500-6 10C1 22 0 16 2.500 13.500c2-2 5-2 9-1z" />
          </g>
        </TaskButton>
        <TaskButton label="消息">
          <path d="M16 8c-5-4-12 0-10 6 2 5 9 4 9 0 0-3-5-4-5-1M18 11c3 8-5 13-12 9-7-5-5-14 2-16M4 8c-3 8 4 14 11 10" fill="none" stroke="#ddd" strokeWidth="1.300" />
          <path d="M14 10l2-2c0-6 1-7 3-8 3 1 4 3 4 8l1 2zM17 11h3v1h-3z" fill="#e9a90c" />
        </TaskButton>
        <span className="mx-2.5 my-3 h-4 w-1 border-x border-[#3c4448]" />
        <TaskButton label="Edge"><path d="M2 11C3 3 8 1 12 1c7 0 10 5 10 12H8c0 6 8 6 12 3v5C12 25 3 22 3 14c0-3 2-6 5-7-3 1-5 2-6 4zm6-2h7c0-5-6-5-7 0z" fill="#0b7ad8" /></TaskButton>
        <TaskButton label="应用商店"><path d="M2 7l20-2v18L4 22z" fill="#fff" /><path d="M7 6c0-6 7-6 8 0" stroke="#fff" strokeWidth="1.500" fill="none" /><path d="M7 10l4-.500V14H7zM12 9.500l6-.500v5h-6zM7 15h4v4l-4-.500zM12 15h6v5l-6-.700z" fill="#020b0e" /></TaskButton>
        <TaskButton label="文件资源管理器"><path d="M1 4h8l2 2h12v16H1z" fill="#f8dc82" /><path d="M1 8h22" stroke="#e5b94a" /><path d="M5 22v-8h14v8h-4v-4H9v4z" fill="#33a6e0" /></TaskButton>
        <TaskButton label="广联达" running>
          <path d="M22 2c-3 4-7 4-10 5-4 2-5 8-1 11 4 2 8-1 7-5 5 2 4 8-1 10C9 26 0 20 2 11 4 3 13 1 22 2z" fill="#1697ee" />
          <path d="M3 9C6 3 15 0 22 2c-4 4-15 1-19 7z" fill="#4cc3f9" />
        </TaskButton>
        <TaskButton label="浏览器" running><circle cx="12" cy="12" r="9.500" fill="#3fa62d" stroke="#f2f2f2" strokeWidth="2" /><path d="M6 10c2-5 10-5 12 0zM6 13h12c-3 5-9 5-12 0z" fill="#fff" /><path d="M2 20c1 2 4 2 7 0M16 3c3-1 5 0 5 2" stroke="#66c536" strokeWidth="2" fill="none" /></TaskButton>
        <TaskButton label="广联达钢筋" running active><rect width="24" height="24" rx="4" fill="#0a92f5" /><path d="M12 4v16M5 12h14M5 12c0 4 4 5 7 2M12 5c2-2 4 0 4 2M19 12c1 3-1 5-4 4" fill="none" stroke="#fff" strokeWidth="2" /></TaskButton>
        <TaskButton label="写字板" running><rect x=".500" y=".500" width="23" height="23" rx="2" fill="#f59a17" stroke="#ffd57a" /><path d="M4 6l13-2 2 14-12 3z" fill="#fff" /><path d="M7 9l8-1M7 12l8-1M8 15l7-1" stroke="#999" /><path d="M22 2L13 15l-1 3 3-2z" fill="#b8431a" stroke="#7c2c10" strokeWidth=".500" /></TaskButton>
      </div>
      <div className="ml-auto flex items-center">
        <div className="w-[60px] text-center leading-[17px]">16%<br />CPU使用</div>
        <div className="ml-[14px] flex items-center gap-[9px]">
          <svg viewBox="0 0 12 8" className="h-2 w-3"><path d="M.5 7L6 1.500 11.500 7" fill="none" stroke="#fff" strokeWidth="1.200" /></svg>
          <svg viewBox="0 0 16 12" className="h-3 w-4"><path d="M5 3.500h10v6H5M15 5h1v3" fill="none" stroke="#fff" /><path d="M7 5h7v3H7z" fill="#fff" /><path d="M1 1v3h3V1M2.500 4v5H5" fill="none" stroke="#fff" /></svg>
          <svg viewBox="0 0 14 14" className="h-3.5 w-3.5"><path d="M1 12C1 6 6 1 13 1M4 13c0-5 4-9 9-9M7 13c0-3 3-6 6-6" fill="none" stroke="#ccc" /><circle cx="11.500" cy="12" r="1.500" fill="#fff" /></svg>
          <svg viewBox="0 0 16 14" className="h-3.5 w-4"><path d="M1 5h2l4-3.500v11L3 9H1z" fill="none" stroke="#fff" /><path d="M9 5c1 1 1 3 0 4M11 3c2 2 2 6 0 8M13 1c3 3 3 9 0 12" fill="none" stroke="#ddd" /></svg>
          <span className="text-[13px]">中</span>
        </div>
        <svg viewBox="0 0 16 16" className="ml-3 h-4 w-4"><path d="M0 2l14-2 2 13-14 3z" fill="#f4511e" /><path d="M12 5C9 3 4 4 5 6c0 3 7 1 7 4 0 3-5 3-8 2" fill="none" stroke="#fff" strokeWidth="2" /></svg>
        <div className="ml-[14px] w-[66px] text-center leading-[18px]">18:32<br />2017/8/9</div>
        <button aria-label="通知" className="relative mr-3.5 ml-4 flex h-10 w-7 items-center">
          <svg viewBox="0 0 16 16" className="mb-1 h-4 w-4"><path d="M0 0h16v12H7l-4 4v-4H0z" fill="#fff" /><path d="M3 3.500h10M3 6.500h10M3 9.500h6" stroke="#020b0e" /></svg>
          <span className="absolute right-0 bottom-1 rounded-full border border-[#888] bg-[#333] px-0.5 text-[11px] leading-[15px] font-bold">15</span>
        </button>
      </div>
    </div>
  );
}

export default function App() {
  return (
    <div className="flex h-screen flex-col overflow-hidden bg-[#f0f0f0] font-['Noto_Sans','Noto_Sans_CJK_SC',sans-serif] text-[12px] leading-4 text-black">
      <TitleBar />
      <MenuBar />
      <Toolbar />
      <main className="flex min-h-0 flex-1 gap-1.5">
        <ModulePanel />
        <div className="flex min-w-0 flex-1 flex-col pr-[3px]">
          <EditBar />
          <div className="flex min-h-0 flex-1 gap-[5px]">
            <ComponentPanel />
            <section className="flex min-w-0 flex-1 flex-col bg-white pb-0.5">
              <div className="flex h-6 shrink-0 items-start">
                <button className="h-[21px] w-[63px] border-x border-t border-[#d9d9d9] bg-white">属性编辑</button>
                <span className="h-[21px] flex-1 border-b border-[#d9d9d9]" />
              </div>
              <div className="mr-0.5 ml-[3px] min-h-0 flex-1 border border-[#a0a0a0] pt-px pl-px">
                <PropertyTable />
              </div>
            </section>
          </div>
        </div>
      </main>
      <StatusBar />
      <TaskBar />
    </div>
  );
}
